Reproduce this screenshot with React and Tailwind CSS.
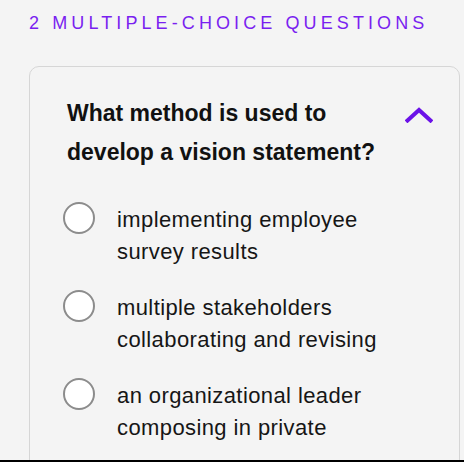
import React from "react";

const choices = [
  ["implementing employee", "survey results"],
  ["multiple stakeholders", "collaborating and revising"],
  ["an organizational leader", "composing in private"],
];

function Choice({ lines }) {
  return (
    <label className="flex items-start">
      <span className="mt-[-2px] h-[32px] w-[32px] shrink-0 rounded-full border-2 border-[#8c8c8c] bg-white" />
      <span className="ml-[22px] text-[22px] leading-[32px] tracking-[0.4px] text-[#161616]">
        {lines[0]}
        <br />
        {lines[1]}
      </span>
    </label>
  );
}

export default function App() {
  return (
    <div className="h-[462px] w-[464px] overflow-hidden border-b-2 border-black bg-[#f4f4f4] font-['Liberation_Sans',Arial,sans-serif]">
      <div className="pl-[29px] pt-[14px] text-[18px] leading-[18px] tracking-[4.1px] text-[#7a1ff0]">
        2 MULTIPLE-CHOICE QUESTIONS
      </div>

      <div className="ml-[29px] mr-[4px] mt-[34px] rounded-[10px] border border-[#d6d6d6] pb-10">
        {/* question header */}
        <div className="flex items-start justify-between pl-[37px] pr-[26px] pt-[27px]">
          <h2 className="w-[330px] text-[23px] font-bold leading-[39px] text-[#111]">
            What method is used to develop a vision statement?
          </h2>
          <svg className="mt-[13px]" width="28" height="16" viewBox="0 0 28 16" fill="none">
            <path d="M2.5 13.5 L14 3 L25.5 13.5" stroke="#6b12e8" strokeWidth="4" strokeLinecap="square" />
          </svg>
        </div>

        {/* answer choices */}
        <div className="ml-[33px] mt-[32px] flex flex-col gap-[24px]">
          {choices.map((c, i) => (
            <Choice key={i} lines={c} />
          ))}
        </div>
      </div>
    </div>
  );
}
